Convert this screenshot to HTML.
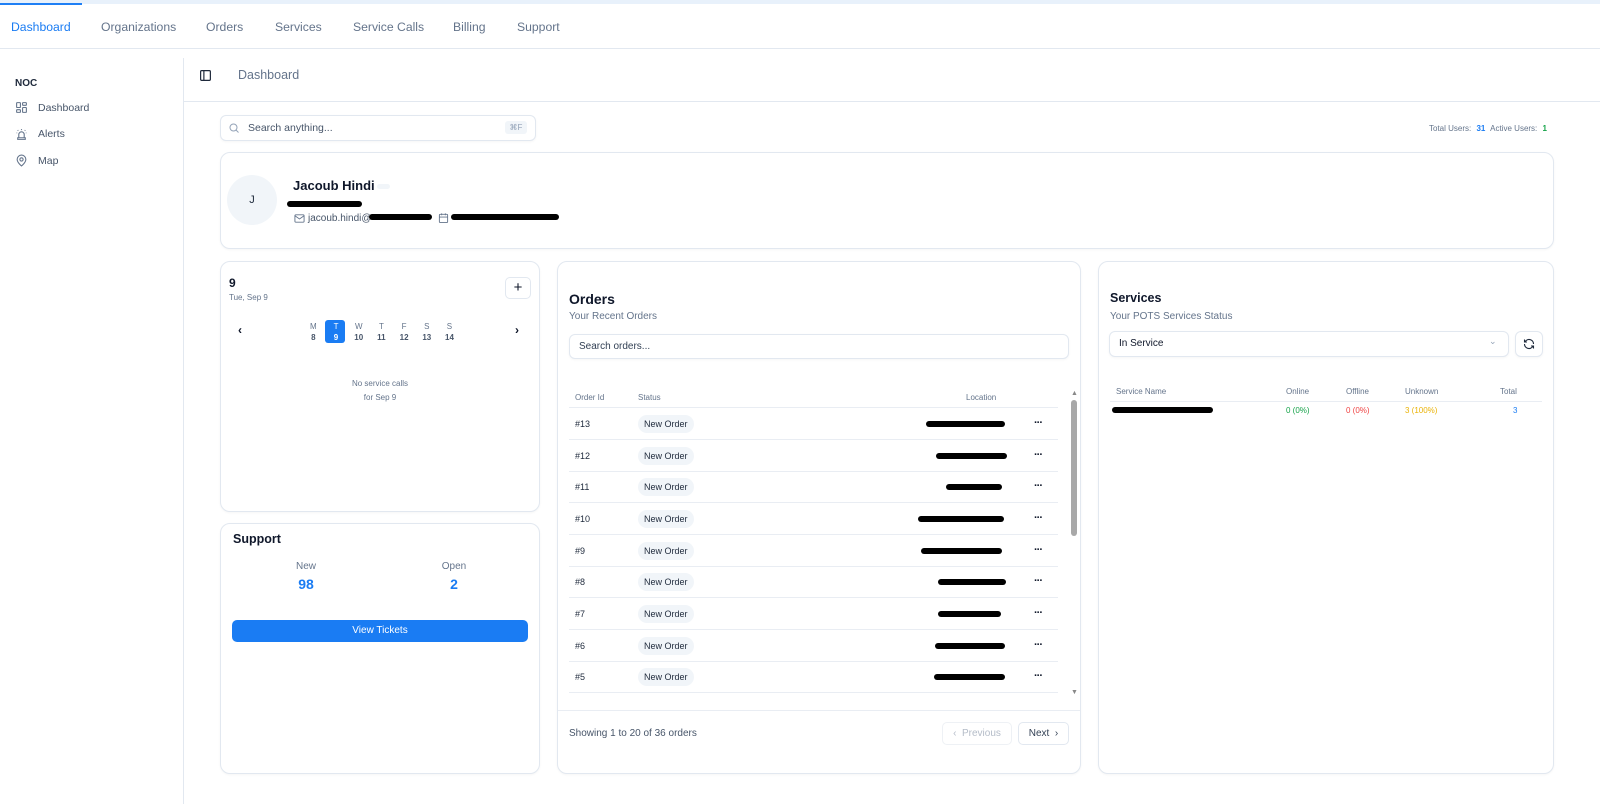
<!DOCTYPE html>
<html><head><meta charset="utf-8"><style>
*{box-sizing:border-box;margin:0;padding:0}
body{width:1600px;height:804px;overflow:hidden;background:#fff;font-family:"Liberation Sans",sans-serif;color:#0f172a;position:relative}
.a{position:absolute;white-space:nowrap}
.card{position:absolute;border:1px solid #e2e8f0;border-radius:10px;background:#fff;box-shadow:0 1px 2px rgba(0,0,0,.04)}
.nav{top:20px;font-size:12.2px;color:#64748b}
.muted{color:#64748b}
.red{position:absolute;height:6px;background:#000;border-radius:3px}
.row{position:absolute;left:569px;width:489px;height:32px;border-bottom:1px solid #e9edf3}
.row .id{position:absolute;left:6px;top:11px;font-size:9px;color:#1e293b}
.row .pill{position:absolute;left:69px;top:7px;height:18px;padding:0 6px;border-radius:9px;background:#f1f5f9;font-size:9px;line-height:18px;color:#1e293b}
.row .dots{position:absolute;left:465px;top:9px;font-size:11px;font-weight:bold;letter-spacing:-1px}
svg{position:absolute}
</style></head><body>
<div class="a" style="left:0;top:0;width:1600px;height:4px;background:#e8f1fb"></div>
<div class="a" style="left:0;top:3px;width:82px;height:2px;background:#1e7ff5"></div>
<div class="a" style="left:0;top:48px;width:1600px;height:1px;background:#e2e8f0"></div>
<div class="a nav" style="left:11px;color:#1a7cf3">Dashboard</div>
<div class="a nav" style="left:101px">Organizations</div>
<div class="a nav" style="left:206px">Orders</div>
<div class="a nav" style="left:275px">Services</div>
<div class="a nav" style="left:353px">Service Calls</div>
<div class="a nav" style="left:453px">Billing</div>
<div class="a nav" style="left:517px">Support</div>

<div class="a" style="left:183px;top:58px;width:1px;height:746px;background:#e2e8f0"></div>
<div class="a" style="left:15px;top:78px;font-size:10px;font-weight:bold;color:#1e293b">NOC</div>
<svg style="left:15px;top:101px" width="13" height="13" viewBox="0 0 24 24" fill="none" stroke="#64748b" stroke-width="2"><rect x="3" y="3" width="7" height="9" rx="1"/><rect x="14" y="3" width="7" height="5" rx="1"/><rect x="14" y="12" width="7" height="9" rx="1"/><rect x="3" y="16" width="7" height="5" rx="1"/></svg>
<div class="a muted" style="left:38px;top:102px;font-size:10.5px;color:#475569">Dashboard</div>
<svg style="left:15px;top:128px" width="13" height="13" viewBox="0 0 24 24" fill="none" stroke="#64748b" stroke-width="2"><path d="M7 18v-6a5 5 0 0 1 10 0v6M5 21h14v-3H5zM12 2v2M3 9h1M20 9h1M5 4l1 1M19 4l-1 1"/></svg>
<div class="a" style="left:38px;top:128px;font-size:10.5px;color:#475569">Alerts</div>
<svg style="left:15px;top:154px" width="13" height="13" viewBox="0 0 24 24" fill="none" stroke="#64748b" stroke-width="2"><path d="M20 10c0 6-8 12-8 12s-8-6-8-12a8 8 0 0 1 16 0z"/><circle cx="12" cy="10" r="3"/></svg>
<div class="a" style="left:38px;top:155px;font-size:10.5px;color:#475569">Map</div>

<svg style="left:199px;top:69px" width="13" height="13" viewBox="0 0 24 24" fill="none" stroke="#1e293b" stroke-width="2.2"><rect x="3" y="3" width="18" height="18" rx="2"/><path d="M9 3v18"/></svg>
<div class="a" style="left:238px;top:68px;font-size:12.5px;color:#64748b">Dashboard</div>
<div class="a" style="left:184px;top:101px;width:1416px;height:1px;background:#e2e8f0"></div>

<div class="card" style="left:220px;top:115px;width:316px;height:26px;border-radius:6px"></div>
<svg style="left:228px;top:122px" width="12" height="12" viewBox="0 0 24 24" fill="none" stroke="#94a3b8" stroke-width="2"><circle cx="11" cy="11" r="7"/><path d="M21 21l-5-5"/></svg>
<div class="a" style="left:248px;top:122px;font-size:10.5px;color:#475569">Search anything...</div>
<div class="a" style="left:505px;top:121px;width:22px;height:13px;background:#f1f5f9;border-radius:3px;font-size:8px;color:#94a3b8;text-align:center;line-height:13px">⌘F</div>
<div class="a" style="left:1429px;top:124px;font-size:8px;color:#64748b">Total Users: <span style="color:#1a7cf3;font-weight:bold;margin:0 3px">31</span> Active Users: <span style="color:#16a34a;font-weight:bold;margin-left:3px">1</span></div>

<div class="card" style="left:220px;top:152px;width:1334px;height:97px"></div>
<div class="a" style="left:227px;top:175px;width:50px;height:50px;border-radius:50%;background:#f1f5f9;font-size:11px;text-align:center;line-height:50px;color:#1e293b">J</div>
<div class="a" style="left:293px;top:178px;font-size:13px;font-weight:bold;color:#0f172a">Jacoub Hindi</div>
<div class="a" style="left:377px;top:184px;width:13px;height:5px;background:#f1f5f9;border-radius:3px"></div>
<div class="red" style="left:287px;top:201px;width:75px"></div>
<svg style="left:294px;top:213px" width="11" height="11" viewBox="0 0 24 24" fill="none" stroke="#64748b" stroke-width="2"><rect x="2" y="4" width="20" height="16" rx="2"/><path d="M2 6l10 7 10-7"/></svg>
<div class="a" style="left:308px;top:213px;font-size:10px;color:#475569">jacoub.hindi@</div>
<div class="red" style="left:369px;top:214px;width:63px"></div>
<svg style="left:438px;top:212px" width="11" height="12" viewBox="0 0 24 24" fill="none" stroke="#64748b" stroke-width="2"><rect x="3" y="4" width="18" height="18" rx="2"/><path d="M16 2v4M8 2v4M3 10h18"/></svg>
<div class="red" style="left:451px;top:214px;width:108px"></div>

<div class="card" style="left:220px;top:261px;width:320px;height:251px"></div>
<div class="a" style="left:229px;top:276px;font-size:12px;font-weight:bold">9</div>
<div class="a" style="left:229px;top:293px;font-size:8px;color:#64748b">Tue, Sep 9</div>
<div class="a" style="left:505px;top:277px;width:26px;height:22px;border:1px solid #e2e8f0;border-radius:5px;font-size:15px;text-align:center;line-height:20px">+</div>
<div class="a" style="left:238px;top:323px;font-size:12px;font-weight:bold">‹</div>
<div class="a" style="left:515px;top:323px;font-size:12px;font-weight:bold">›</div>
<div class="a" style="left:325px;top:320px;width:20px;height:23px;background:#1a7cf3;border-radius:3px"></div>
<div class="a" style="left:302px;top:321px;font-size:8px;line-height:11px;text-align:center;color:#64748b;display:flex">
<div style="width:22.7px">M<br><b style="color:#475569">8</b></div><div style="width:22.7px;color:#fff">T<br><b>9</b></div><div style="width:22.7px">W<br><b style="color:#475569">10</b></div><div style="width:22.7px">T<br><b style="color:#475569">11</b></div><div style="width:22.7px">F<br><b style="color:#475569">12</b></div><div style="width:22.7px">S<br><b style="color:#475569">13</b></div><div style="width:22.7px">S<br><b style="color:#475569">14</b></div></div>
<div class="a" style="left:330px;top:377px;width:100px;text-align:center;font-size:8px;line-height:14px;color:#64748b;white-space:normal">No service calls<br>for Sep 9</div>

<div class="card" style="left:220px;top:523px;width:320px;height:251px"></div>
<div class="a" style="left:233px;top:532px;font-size:12.5px;font-weight:bold">Support</div>
<div class="a" style="left:280px;top:561px;width:52px;text-align:center;font-size:10px;color:#64748b">New</div>
<div class="a" style="left:280px;top:576px;width:52px;text-align:center;font-size:14px;font-weight:bold;color:#1a7cf3">98</div>
<div class="a" style="left:428px;top:561px;width:52px;text-align:center;font-size:10px;color:#64748b">Open</div>
<div class="a" style="left:428px;top:576px;width:52px;text-align:center;font-size:14px;font-weight:bold;color:#1a7cf3">2</div>
<div class="a" style="left:232px;top:620px;width:296px;height:22px;background:#1a7cf3;border-radius:5px;color:#fff;font-size:10px;text-align:center;line-height:22px">View Tickets</div>

<div class="card" style="left:557px;top:261px;width:524px;height:513px"></div>
<div class="a" style="left:569px;top:291px;font-size:14px;font-weight:bold">Orders</div>
<div class="a" style="left:569px;top:311px;font-size:10px;color:#64748b">Your Recent Orders</div>
<div class="card" style="left:569px;top:334px;width:500px;height:25px;border-radius:6px"></div>
<div class="a" style="left:579px;top:341px;font-size:10px;color:#334155">Search orders...</div>
<div class="a" style="left:575px;top:393px;font-size:8px;color:#64748b">Order Id</div>
<div class="a" style="left:638px;top:393px;font-size:8px;color:#64748b">Status</div>
<div class="a" style="left:966px;top:393px;font-size:8px;color:#64748b">Location</div>
<div class="a" style="left:569px;top:407px;width:489px;height:1px;background:#e9edf3"></div>
<div class="row" style="top:408px"><span class="id">#13</span><span class="pill">New Order</span><div class="red" style="left:357px;top:13px;width:79px"></div><span class="dots">···</span></div>
<div class="row" style="top:440px"><span class="id">#12</span><span class="pill">New Order</span><div class="red" style="left:367px;top:13px;width:71px"></div><span class="dots">···</span></div>
<div class="row" style="top:471px"><span class="id">#11</span><span class="pill">New Order</span><div class="red" style="left:377px;top:13px;width:56px"></div><span class="dots">···</span></div>
<div class="row" style="top:503px"><span class="id">#10</span><span class="pill">New Order</span><div class="red" style="left:349px;top:13px;width:86px"></div><span class="dots">···</span></div>
<div class="row" style="top:535px"><span class="id">#9</span><span class="pill">New Order</span><div class="red" style="left:352px;top:13px;width:81px"></div><span class="dots">···</span></div>
<div class="row" style="top:566px"><span class="id">#8</span><span class="pill">New Order</span><div class="red" style="left:369px;top:13px;width:68px"></div><span class="dots">···</span></div>
<div class="row" style="top:598px"><span class="id">#7</span><span class="pill">New Order</span><div class="red" style="left:369px;top:13px;width:63px"></div><span class="dots">···</span></div>
<div class="row" style="top:630px"><span class="id">#6</span><span class="pill">New Order</span><div class="red" style="left:366px;top:13px;width:70px"></div><span class="dots">···</span></div>
<div class="row" style="top:661px"><span class="id">#5</span><span class="pill">New Order</span><div class="red" style="left:365px;top:13px;width:71px"></div><span class="dots">···</span></div>
<div class="a" style="left:1071px;top:390px;font-size:7px;color:#888">▲</div>
<div class="a" style="left:1071px;top:400px;width:6px;height:136px;background:#a8a8a8;border-radius:3px"></div>
<div class="a" style="left:1071px;top:689px;font-size:7px;color:#888">▼</div>
<div class="a" style="left:558px;top:710px;width:522px;height:1px;background:#e9edf3"></div>
<div class="a" style="left:569px;top:728px;font-size:10px;color:#475569">Showing 1 to 20 of 36 orders</div>
<div class="a" style="left:942px;top:722px;width:70px;height:23px;border:1px solid #eef1f5;border-radius:5px;font-size:10px;color:#b4bcc8;text-align:center;line-height:21px">‹ &nbsp;Previous</div>
<div class="a" style="left:1018px;top:722px;width:51px;height:23px;border:1px solid #e2e8f0;border-radius:5px;font-size:10px;color:#334155;text-align:center;line-height:21px">Next &nbsp;›</div>

<div class="card" style="left:1098px;top:261px;width:456px;height:513px"></div>
<div class="a" style="left:1110px;top:291px;font-size:12.5px;font-weight:bold">Services</div>
<div class="a" style="left:1110px;top:311px;font-size:10px;color:#64748b">Your POTS Services Status</div>
<div class="card" style="left:1109px;top:331px;width:400px;height:26px;border-radius:6px"></div>
<div class="a" style="left:1119px;top:338px;font-size:10px;color:#0f172a">In Service</div>
<div class="a" style="left:1489px;top:336px;font-size:9px;color:#94a3b8">⌄</div>
<div class="card" style="left:1515px;top:331px;width:28px;height:26px;border-radius:6px"></div>
<svg style="left:1523px;top:338px" width="12" height="12" viewBox="0 0 24 24" fill="none" stroke="#1e293b" stroke-width="2.2"><path d="M21 12a9 9 0 0 0-15-6.7L3 8M3 3v5h5M3 12a9 9 0 0 0 15 6.7L21 16M21 21v-5h-5"/></svg>
<div class="a" style="left:1116px;top:387px;font-size:8px;color:#64748b">Service Name</div>
<div class="a" style="left:1286px;top:387px;font-size:8px;color:#64748b">Online</div>
<div class="a" style="left:1346px;top:387px;font-size:8px;color:#64748b">Offline</div>
<div class="a" style="left:1405px;top:387px;font-size:8px;color:#64748b">Unknown</div>
<div class="a" style="left:1500px;top:387px;font-size:8px;color:#64748b">Total</div>
<div class="a" style="left:1110px;top:401px;width:432px;height:1px;background:#e9edf3"></div>
<div class="red" style="left:1112px;top:407px;width:101px"></div>
<div class="a" style="left:1286px;top:406px;font-size:8px;color:#16a34a">0 (0%)</div>
<div class="a" style="left:1346px;top:406px;font-size:8px;color:#ef4444">0 (0%)</div>
<div class="a" style="left:1405px;top:406px;font-size:8px;color:#eab308">3 (100%)</div>
<div class="a" style="left:1513px;top:406px;font-size:8px;color:#1a7cf3">3</div>
</body></html>
